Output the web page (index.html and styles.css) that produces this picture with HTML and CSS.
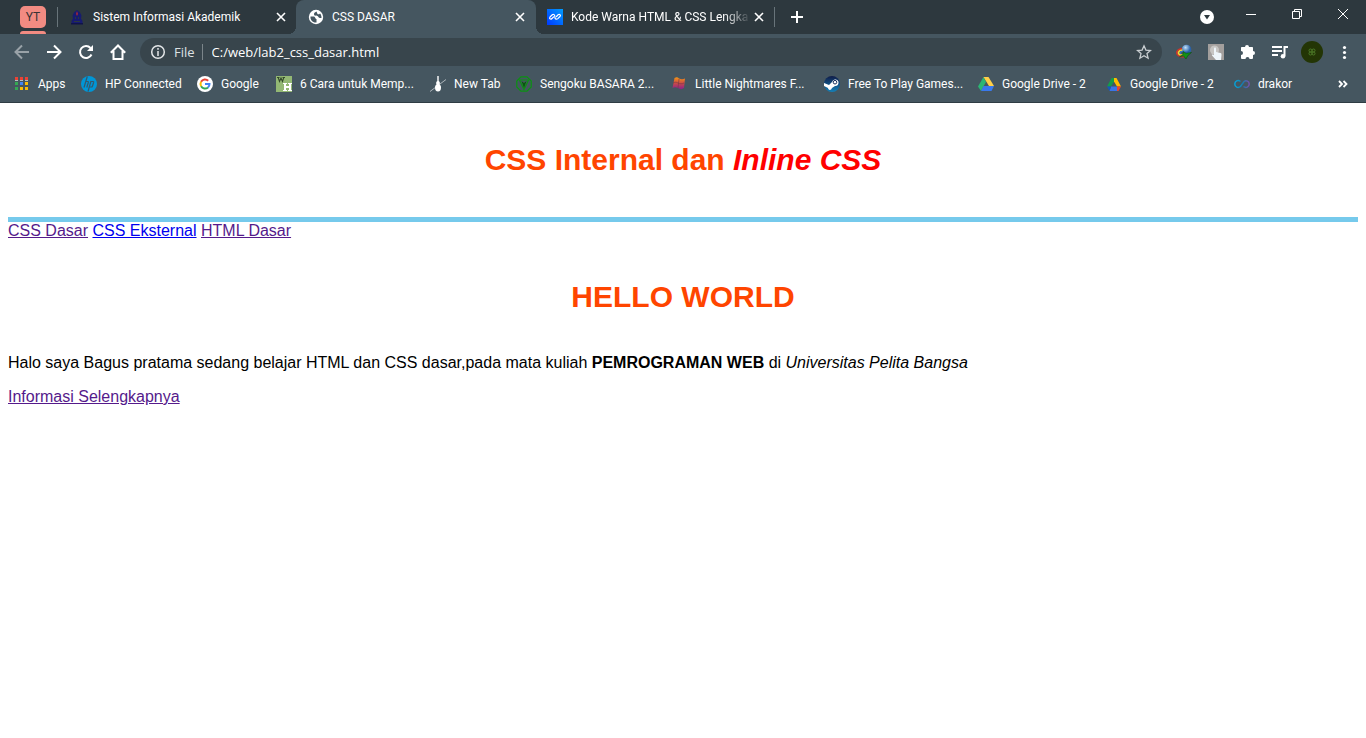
FILE: index.html
```html
<!DOCTYPE html>
<html lang="id">
<head>
<meta charset="utf-8">
<title>CSS DASAR</title>
<link rel="stylesheet" href="styles.css">
</head>
<body>
<div class="browser">
  <div class="tab-strip">
    <button class="group" type="button"><span class="group-chip">YT</span></button>
    <span class="divider group-divider"></span>
    <div class="tab tab-first">
      <svg class="favicon" viewBox="0 0 16 16" aria-hidden="true"><path fill="#171b70" d="M8 1l3 2.500 1.500 3-.5 3 1.500 2.500v2h-11v-2L4 9.500l-.5-3 1.500-3z"/><path fill="#2d383e" d="M6 8h1v2H6zM9 8h1v2H9zM5 12h6v1H5z"/><path fill="#a3253a" d="M8 2l1 3-1 2-1-2z"/><path fill="#10134a" d="M2 14h12v1.500H2z"/></svg>
      <span class="tab-title">Sistem Informasi Akademik</span>
      <button class="close" type="button" aria-label="Tutup tab"><svg viewBox="0 0 16 16"><path d="M4 4l8 8M12 4l-8 8"/></svg></button>
    </div>
    <div class="tab tab-active">
      <svg class="favicon" viewBox="0 0 16 16" aria-hidden="true"><circle cx="8" cy="8" r="7.200" fill="#fff"/><path fill="#455660" d="M2.500 7.500h3c2 0 1.500 2.500 3 2.500v3.500C5 14 2 11 2.500 7.500zM8.500 2.500c-1 .5-2.500 1-2.500 2.500 0 2 2 1.500 3.500 2 1 .5 1 2 2.500 2h1.500c0-2-.5-3.500-1.500-4.500-1 1-2 1-2.500.5z"/></svg>
      <span class="tab-title">CSS DASAR</span>
      <button class="close" type="button" aria-label="Tutup tab"><svg viewBox="0 0 16 16"><path d="M4 4l8 8M12 4l-8 8"/></svg></button>
    </div>
    <div class="tab tab-last">
      <svg class="favicon" viewBox="0 0 16 16" aria-hidden="true"><defs><linearGradient id="blue" x2="1" y1="1" y2="0"><stop stop-color="#0038ff"/><stop offset="1" stop-color="#009dff"/></linearGradient></defs><path fill="url(#blue)" d="M0 0h16v16H0z"/><path fill="none" stroke="#fff" stroke-width="1.200" stroke-linecap="round" stroke-linejoin="round" d="M6.500 8L5 9.500C3.500 11 1.800 9.500 3 8l2-2c1-1 2.500-.5 2.700.6L8 9c.3 1.300 1.800 1.500 2.800.6L13 7.500c1.200-1.500-.5-3-2-1.700L9.500 7.500"/></svg>
      <span class="tab-title tab-fade">Kode Warna HTML &amp; CSS Lengka</span>
      <button class="close" type="button" aria-label="Tutup tab"><svg viewBox="0 0 16 16"><path d="M4 4l8 8M12 4l-8 8"/></svg></button>
    </div>
    <span class="divider"></span>
    <button class="new-tab" type="button" aria-label="Tab baru"><svg viewBox="0 0 16 16"><path d="M8 2v12M2 8h12"/></svg></button>
    <div class="window-controls">
      <button class="search-tabs" type="button" aria-label="Telusuri tab"><svg viewBox="0 0 16 16"><circle cx="8" cy="8" r="7" fill="#fff"/><path fill="#2d383e" d="M5 6h6l-3 4.500z"/></svg></button>
      <button type="button" aria-label="Minimalkan"><svg viewBox="0 0 16 16"><path d="M3 8.500h10"/></svg></button>
      <button type="button" aria-label="Pulihkan"><svg viewBox="0 0 16 16"><path d="M3.500 5.500h7v7h-7zM5.500 5.500v-2h7v7h-2"/></svg></button>
      <button type="button" aria-label="Tutup"><svg viewBox="0 0 16 16"><path d="M3 3l10 10M13 3L3 13"/></svg></button>
    </div>
  </div>

  <div class="toolbar">
    <button class="tool tool-dim" type="button" aria-label="Kembali"><svg viewBox="0 0 16 16"><path d="M15 8H2M8 1.500L1.500 8 8 14.500"/></svg></button>
    <button class="tool" type="button" aria-label="Maju"><svg viewBox="0 0 16 16"><path d="M1 8h13M8 1.500L14.500 8 8 14.500"/></svg></button>
    <button class="tool" type="button" aria-label="Muat ulang"><svg viewBox="0 0 16 16"><path d="M13.500 10.500A6 6 0 1 1 12.500 4"/><path class="solid" d="M15 1v6H9z"/></svg></button>
    <button class="tool" type="button" aria-label="Beranda"><svg viewBox="0 0 16 16"><path d="M.8 8.800L8 1.500l7.200 7.300M3.500 7v8h9V7"/></svg></button>
    <div class="omnibox">
      <svg class="info" viewBox="0 0 16 16" aria-hidden="true"><circle cx="8" cy="8" r="6.300"/><path d="M8 7v5M8 4v1.800"/></svg>
      <label class="scheme" for="address">File</label>
      <span class="address-divider"></span>
      <input class="address" id="address" type="text" value="C:/web/lab2_css_dasar.html">
      <button class="star" type="button" aria-label="Bookmark"><svg viewBox="0 0 16 16"><path d="M8 1.800l1.900 4.300 4.600.4-3.500 3.100 1.100 4.600L8 11.700l-4.100 2.500L5 9.600 1.500 6.500l4.600-.4z"/></svg></button>
    </div>
    <button class="tool" type="button" aria-label="Internet Download Manager"><svg class="art" viewBox="0 0 16 16"><defs><radialGradient id="globe" cx=".4" cy=".3"><stop stop-color="#c4e2f8"/><stop offset="1" stop-color="#2a62a8"/></radialGradient></defs><circle cx="10.500" cy="5.500" r="4.800" fill="url(#globe)"/><path fill="none" stroke="#d0342a" stroke-width="1.600" d="M6 4.500C.5 5.500-.5 9.500 2.500 11.500c2 1.500 4 1.500 6 1"/><path fill="none" stroke="#f0dc30" stroke-width="1.600" d="M6.500 6C2 6.500 1.500 9.500 4 10.800l4 .4"/><path fill="none" stroke="#2f75d0" stroke-width="1.200" d="M7 7.300c-3 0-3.500 1.700-2 2.500"/><path fill="#149018" stroke="#064a0a" stroke-width=".5" d="M7 7.500l3 1.800 5.500-.8-3.700 3.200L10 15l-2.500-3-4 .8L7 10.500z"/></svg></button>
    <button class="tool" type="button" aria-label="Klik otomatis"><svg class="art" viewBox="0 0 16 16"><path fill="#a39f9d" d="M0 0h16v16H0z"/><circle cx="6.500" cy="6" r="4.500" fill="#c7c5c3"/><path fill="#eef5fa" d="M6 4.500c0-1.500 2-1.500 2 0V8l4.500 1c1 .3 1 1 1 2L13 16H8l-4-4.500c-.5-1 .5-1.500 2-.5z"/></svg></button>
    <button class="tool" type="button" aria-label="Ekstensi"><svg class="art" viewBox="0 0 16 16"><path fill="#fff" d="M5 3a2 2 0 0 1 4 0h3c.7 0 1 .3 1 1v3a2 2 0 0 1 0 4v2.700c0 .8-.5 1.300-1.300 1.300H9.500a2 2 0 0 0-4 0H2.300c-.8 0-1.300-.5-1.300-1.300V11a2 2 0 0 0 0-4V4c0-.7.400-1 1-1z"/></svg></button>
    <button class="tool" type="button" aria-label="Kontrol media"><svg viewBox="0 0 16 16"><path d="M0 3h10M0 7h10M0 11h6M12.500 12V3H16"/><circle class="solid" cx="11" cy="12.300" r="2.300"/></svg></button>
    <button class="tool" type="button" aria-label="Profil"><span class="avatar"><svg viewBox="0 0 8 8"><circle cx="2.500" cy="2.500" r="1.500"/><circle cx="5.500" cy="2.500" r="1.500"/><circle cx="2.500" cy="5.500" r="1.500"/><circle cx="5.500" cy="5.500" r="1.500"/></svg></span></button>
    <button class="tool" type="button" aria-label="Menu"><svg class="art" viewBox="0 0 16 16"><g fill="#fff"><circle cx="8.500" cy="3.500" r="1.600"/><circle cx="8.500" cy="8.500" r="1.600"/><circle cx="8.500" cy="13.500" r="1.600"/></g></svg></button>
  </div>

  <nav class="bookmarks" aria-label="Bookmark">
    <a class="bookmark" href="#"><svg viewBox="0 0 16 16"><path fill="#ea4335" d="M1 1h3v3H1zM6 1h3v3H6zM11 1h3v3h-3z"/><path fill="#b8bec1" d="M1 4h3v1H1zM6 4h3v1H6zM11 4h3v1h-3z"/><path fill="#34a853" d="M1 6h3v3H1zM1 11h3v3H1z"/><path fill="#4285f4" d="M6 6h3v3H6z"/><path fill="#fbbc05" d="M11 6h3v3h-3zM6 11h3v3H6zM11 11h3v3h-3z"/></svg><span>Apps</span></a>
    <a class="bookmark" href="#"><svg viewBox="0 0 16 16"><circle cx="8" cy="8" r="8" fill="#0096d6"/><path fill="none" stroke="#35586c" stroke-width="1.200" d="M6.300.5L3 11.500M4.800 5.500h1.700c.8 0 1 .3.800 1L5.800 11.500M10 5L7 15.500M9.800 5.500h2c.8 0 1 .3.800 1l-1.200 3.700c-.2.600-.5.800-1.100.8H8.500"/></svg><span>HP Connected</span></a>
    <a class="bookmark" href="#"><svg viewBox="0 0 16 16"><circle cx="8" cy="8" r="8" fill="#fff"/><g fill="none" stroke-width="2"><path stroke="#ea4335" d="M4.100 5.800A4.500 4.500 0 0 1 11.200 4.800"/><path stroke="#fbbc05" d="M4.100 5.800a4.500 4.500 0 0 0 0 4.400"/><path stroke="#34a853" d="M4.100 10.200a4.500 4.500 0 0 0 6.900 1.200"/><path stroke="#4285f4" d="M11 11.400A4.500 4.500 0 0 0 12.500 8H8"/></g></svg><span>Google</span></a>
    <a class="bookmark" href="#"><svg viewBox="0 0 16 16"><path fill="#93b874" d="M0 0h16v16H0z"/><path fill="none" stroke="#344a2b" stroke-width="1.100" d="M1 1.500h2.500M6.500 1.500H9M2.200 1.500l1.300 4L5 2l1.500 3.500 1.300-4"/><path fill="#fff" d="M7 7h4v1h-1v2h3V8h-1V7h4v1h-1v6h1v1h-4v-1h1v-2h-3v2h1v1H7v-1h1V8H7z"/></svg><span>6 Cara untuk Memp...</span></a>
    <a class="bookmark" href="#"><svg viewBox="0 0 16 16"><path stroke="#aeb6bb" stroke-width="1" d="M0 15.500L16 3.500"/><path fill="#fff" d="M7.300 0h1.400v5c1.500 1 1.300 2.500.8 3.500 1 .5 1.500 1.500 1.500 3 0 2.500-1 4-3 4s-3-1.500-3-4c0-1.500.5-2.500 1.500-3C6 7.500 5.800 6 7.300 5z"/></svg><span>New Tab</span></a>
    <a class="bookmark" href="#"><svg viewBox="0 0 16 16"><g fill="none" stroke="#0b9212" stroke-width="1.200"><path d="M5 .8h6L15.200 5v6L11 15.200H5L.8 11V5z"/><path d="M3.500 4h9L8 13.500z"/></g><path fill="#075b0a" d="M5.500 5L8 7l2.500-2L8 12z"/></svg><span>Sengoku BASARA 2...</span></a>
    <a class="bookmark" href="#"><svg viewBox="0 0 16 16"><defs><linearGradient id="flag" x2="0" y2="1"><stop stop-color="#f59514"/><stop offset=".5" stop-color="#c94b48"/><stop offset="1" stop-color="#8b208c"/></linearGradient></defs><path fill="url(#flag)" d="M3.500 2c2-1 3-1 4.500.5 2 1 4 1 6 0l-1 9.500c-2 1.500-4 1.500-6 0-2-1-3.500-1-5.500 0z"/><path fill="none" stroke="#733844" stroke-width=".6" d="M8 3L7 12M2 7c2-1 3-1 5 0s4 1 6 0"/></svg><span>Little Nightmares F...</span></a>
    <a class="bookmark" href="#"><svg viewBox="0 0 16 16"><defs><linearGradient id="steam" x2="0" y2="1"><stop stop-color="#101c48"/><stop offset="1" stop-color="#1481b9"/></linearGradient></defs><circle cx="8" cy="8" r="8" fill="url(#steam)"/><path fill="#fff" d="M0 7l5 2 3-3a3.300 3.300 0 1 1 3 4l-3 2c-1 3-4 2-4 0L0 10z"/><circle cx="11" cy="6.200" r="1.800" fill="#fff" stroke="#17305d"/></svg><span>Free To Play Games...</span></a>
    <a class="bookmark" href="#"><svg viewBox="0 0 16 16"><path fill="#2bb673" d="M5.500 1L0 10.500 3 15l5-9z"/><path fill="#ffcf48" d="M5.500 1h5l5.500 9h-5z"/><path fill="#3979ed" d="M5.500 10H16l-2.500 5H3z"/></svg><span>Google Drive - 2</span></a>
    <a class="bookmark" href="#"><svg viewBox="0 0 16 16"><path fill="#149b49" d="M5.500 2L1 10.500h4L8 5.500V2z"/><path fill="#ffbd00" d="M8 2h2.500L15 10.500h-4L8 5.500z"/><path fill="#3975e8" d="M5 10.500h6V15H3.500z"/><path fill="#1558ba" d="M1 10.500h4L3.500 15z"/><path fill="#e54335" d="M11 10.500h4L12.500 15H11z"/></svg><span>Google Drive - 2</span></a>
    <a class="bookmark" href="#"><svg viewBox="0 0 16 16"><defs><linearGradient id="loop"><stop stop-color="#00a6df"/><stop offset=".55" stop-color="#167cae"/><stop offset="1" stop-color="#7a4fb0"/></linearGradient></defs><path fill="none" stroke="url(#loop)" stroke-width="1.400" d="M6.500 5.500C4 3.500.8 5 .8 8s3.200 4.500 5.700 2.500L10 5.500c2-1.500 5.200-.5 5.200 2.500S12 12.500 9.500 10.500"/></svg><span>drakor</span></a>
    <button class="more" type="button" aria-label="Bookmark lainnya"><svg viewBox="0 0 16 16"><path d="M4 5l3 3-3 3M8.500 5l3 3-3 3"/></svg></button>
  </nav>
</div>

<div class="page">
  <header class="page-header">
    <h1>CSS Internal dan <i class="inline-name">Inline CSS</i></h1>
  </header>
  <nav class="page-nav">
    <a class="visited" href="#">CSS Dasar</a>
    <a href="#">CSS Eksternal</a>
    <a class="visited" href="#">HTML Dasar</a>
  </nav>
  <main class="intro">
    <h1>HELLO WORLD</h1>
    <p>Halo saya Bagus pratama sedang belajar HTML dan CSS dasar,pada mata kuliah <b>PEMROGRAMAN WEB</b> di <i>Universitas Pelita Bangsa</i></p>
    <a class="visited" href="#">Informasi Selengkapnya</a>
  </main>
</div>
</body>
</html>
```

FILE: styles.css
```css
* {
  box-sizing: border-box;
}

body {
  margin: 0;
  background: #fff;
  color: #000;
  font: 16px/18px "Liberation Sans", Arial, sans-serif;
}

.browser {
  background: #455660;
  border-bottom: 1px solid #2f3c43;
  color: #fff;
  font: 12px/16px Roboto, "Segoe UI", sans-serif;
}

.browser button {
  display: flex;
  align-items: center;
  justify-content: center;
  flex: none;
  padding: 0;
  border: 0;
  background: none;
  color: inherit;
  font: inherit;
}

.browser svg {
  display: block;
  flex: none;
  width: 16px;
  height: 16px;
}

.browser button svg {
  fill: none;
  stroke: #fff;
}

.browser button .art,
.browser .search-tabs svg {
  stroke: none;
}

/* Tabs */
.tab-strip {
  display: flex;
  align-items: center;
  height: 34px;
  background: #2d383e;
}

.browser .group {
  flex-direction: column;
  justify-content: space-between;
  width: 26px;
  height: 34px;
  margin-left: 20px;
  padding-top: 6px;
}

.group::after {
  content: "";
  width: 26px;
  height: 3px;
  border-radius: 3px 3px 0 0;
  background: #f28b82;
}

.group-chip {
  width: 26px;
  border-radius: 5px;
  background: #f28b82;
  color: #3a3335;
  line-height: 22px;
}

.divider {
  width: 1px;
  height: 20px;
  background: #68747a;
}

.group-divider {
  margin-left: 11px;
}

.tab {
  display: flex;
  align-items: center;
  width: 238px;
  height: 34px;
  padding: 0 7px 0 11px;
}

.favicon {
  margin-right: 8px;
}

.tab-title {
  flex: 1;
  min-width: 0;
  overflow: hidden;
  white-space: nowrap;
}

.tab-fade {
  mask-image: linear-gradient(to right, #000 85%, transparent);
}

.tab-active {
  position: relative;
  width: 240px;
  padding: 0 8px 0 12px;
  border-radius: 8px 8px 0 0;
  background: #455660;
}

.tab-active::before,
.tab-active::after {
  content: "";
  position: absolute;
  bottom: 0;
  width: 8px;
  height: 8px;
}

.tab-active::before {
  right: 100%;
  background: radial-gradient(circle at 0 0, transparent 8px, #455660 8px);
}

.tab-active::after {
  left: 100%;
  background: radial-gradient(circle at 100% 0, transparent 8px, #455660 8px);
}

.close svg {
  stroke-width: 1.6;
}

.browser .new-tab {
  width: 44px;
  height: 34px;
}

.new-tab svg {
  stroke-width: 2;
}

.window-controls {
  display: flex;
  height: 28px;
  margin: 0 0 6px auto;
}

.window-controls button {
  width: 46px;
}

.browser .search-tabs {
  width: 42px;
  padding-top: 6px;
}

/* Toolbar */
.toolbar {
  display: flex;
  align-items: center;
  height: 36px;
  padding: 0 6px;
}

.browser .tool {
  width: 32px;
  height: 32px;
}

.tool svg {
  stroke-width: 2;
}

.tool .solid {
  fill: #fff;
  stroke: none;
}

.tool-dim {
  opacity: 0.45;
}

.omnibox {
  display: flex;
  align-items: center;
  flex: 1;
  height: 28px;
  margin: 0 6px;
  padding: 0 10px;
  border-radius: 14px;
  background: #38454c;
  font-family: "Open Sans", "Segoe UI", sans-serif;
  font-size: 13px;
}

.info {
  fill: none;
  stroke: #e3e6e8;
  stroke-width: 1.5;
}

.scheme {
  margin-left: 8px;
  color: #dde1e3;
}

.address-divider {
  width: 1px;
  height: 16px;
  margin: 0 9px 0 7px;
  background: #7b858a;
}

.address {
  flex: 1;
  min-width: 0;
  padding: 0;
  border: 0;
  outline: 0;
  background: none;
  color: #fff;
  font: inherit;
}

.browser .star svg {
  stroke: #c9ced1;
  stroke-width: 1.3;
}

.avatar {
  display: grid;
  place-items: center;
  width: 22px;
  height: 22px;
  border-radius: 50%;
  background: #233505;
}

.browser .avatar svg {
  width: 8px;
  height: 8px;
  stroke: #4d7a28;
  stroke-width: 1;
}

/* Bookmarks */
.bookmarks {
  display: grid;
  grid-template-columns: 67px 116px 79px 154px 86px 155px 153px 154px 128px 128px 60px 1fr;
  align-items: center;
  height: 32px;
  padding: 0 15px 4px 14px;
}

.bookmark {
  display: flex;
  align-items: center;
  gap: 8px;
  color: #fff;
  text-decoration: none;
  white-space: nowrap;
}

.browser .more {
  justify-self: end;
}

.more svg {
  stroke-width: 1.8;
}

/* Document */
.page {
  padding: 0 8px;
}

.page h1 {
  margin: 0;
  padding: 40px 0;
  color: #ff4500;
  font-size: 30px;
  line-height: 34px;
  text-align: center;
}

.page h1 .inline-name {
  color: #f00;
}

.page-header {
  border-bottom: 5px solid #76caec;
}

.page a {
  color: #00e;
}

.page .visited {
  color: #551a8b;
}

.intro p {
  margin: 0 0 16px;
}
```
